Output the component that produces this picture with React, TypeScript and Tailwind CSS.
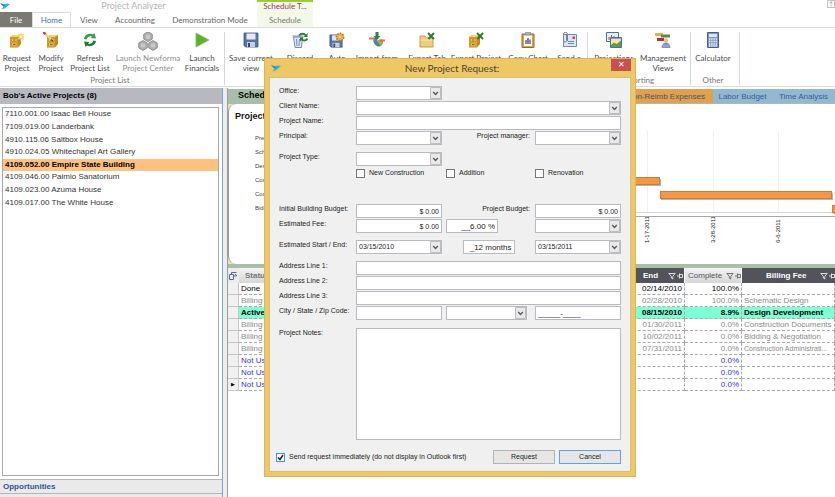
import { useState } from "react"
import type { ReactNode } from "react"

type Tool = { label: string; width: string; icon: ReactNode; disabled?: boolean }

const Bird = () => (
  <svg className="h-2 w-2.5 shrink-0" viewBox="0 0 10 8">
    <path d="M0 1.2 4 2 8 1.4 10 2.6 7.8 3.8 5.6 6 1.5 7.4 3.6 4.6Z" fill="#3aaee0" />
    <path d="M0 1.2 3.6 4.6 5.4 3.4Z" fill="#1b86bd" />
  </svg>
)

const Cabinet = ({ x = 1, y = 3 }: { x?: number; y?: number }) => (
  <g transform={`translate(${x} ${y})`}>
    <path d="M0 2 3 0h8v9l-3 3.500H0Z" fill="#c08a1c" />
    <path d="M0 2 3 0h8L8 2Z" fill="#f4d274" />
    <path d="M.5 2.500h7.500v9.500H.5Z" fill="#e3ad36" />
    <path d="M1.500 3.500h5.500v3H1.500ZM1.500 8h5.500v3H1.500Z" fill="#f4cb62" stroke="#b27e1a" strokeWidth=".6" />
    <path d="M3 5h2.500M3 9.500h2.500" stroke="#8a6210" />
  </g>
)

const Disk = () => (
  <g>
    <path d="M1 1h14v14H2.500L1 13.500Z" fill="#5674a6" stroke="#3a5484" strokeWidth=".8" />
    <path d="M3.500 1.500h9v6h-9Z" fill="#e4ebf5" />
    <path d="M4 10h8v5H4Z" fill="#c6d0df" />
    <path d="M5 11h2v4H5Z" fill="#2f4773" />
  </g>
)

const Excel = () => <path d="m9 1 6 6M15 1 9.500 7" stroke="#2a7d34" strokeWidth="2" />

const Icon = ({ children }: { children: ReactNode }) => (
  <svg className="h-4 w-4 shrink-0" viewBox="0 0 16 16" fill="none">
    {children}
  </svg>
)

const hexagon = "m0-4.300 3.700 2.100v4.300L0 4.300l-3.700-2.200v-4.300Z"

const projectTools: Tool[] = [
  {
    label: "Request Project",
    width: "w-[34px]",
    icon: (
      <Icon>
        <Cabinet />
        <path d="m12 0 .8 2.600 2.400-1-1 2.400 1.800.8-1.800.8 1 2.400-2.400-1L12 9.400l-.8-2.400-2.400 1 1-2.400-1.800-.8 1.800-.8-1-2.400 2.400 1Z" fill="#f8d063" />
        <circle cx="12" cy="4.700" r="1.400" fill="#fff6cf" />
      </Icon>
    ),
  },
  {
    label: "Modify Project",
    width: "w-[34px]",
    icon: (
      <Icon>
        <Cabinet x={4} y={3} />
        <path d="m1 1 8 7" stroke="#f2c98c" strokeWidth="2.200" />
        <path d="m0 0 2.500 2.200" stroke="#d4374f" strokeWidth="2.400" />
        <path d="m8 7.500 2 1.800" stroke="#554128" strokeWidth="1.200" />
      </Icon>
    ),
  },
  {
    label: "Refresh Project List",
    width: "w-11",
    icon: (
      <Icon>
        <path d="M2 7c.5-4 5-6.500 9-4.500L12.500 1l1.500 5.500-5.500-.5 1.500-1.500C7.500 3.500 5 5 4.800 7.500Z" fill="#3f9b4d" />
        <path d="M14 9c-.5 4-5 6.500-9 4.500L3.500 15 2 9.500l5.500.5L6 11.500c2.500 1 5-.500 5.200-3Z" fill="#26773c" />
      </Icon>
    ),
  },
  {
    label: "Launch Newforma Project Center",
    width: "w-[72px]",
    disabled: true,
    icon: (
      <svg className="h-5 w-5 shrink-0" viewBox="0 0 20 20">
        <g fill="#b0b0b0" stroke="#8c8c8c" strokeWidth=".8">
          <path transform="translate(10 4.700) scale(1.150)" d={hexagon} />
          <path transform="translate(5 13.500) scale(1.150)" d={hexagon} />
          <path transform="translate(15 13.500) scale(1.150)" d={hexagon} />
        </g>
        <g fill="#c8c8c8">
          <circle cx="10" cy="4.700" r="2.300" />
          <circle cx="5" cy="13.500" r="2.300" />
          <circle cx="15" cy="13.500" r="2.300" />
        </g>
      </svg>
    ),
  },
  {
    label: "Launch Financials",
    width: "w-9",
    icon: (
      <Icon>
        <path d="M2 1 15 8 2 15Z" fill="#5fae2e" stroke="#82c052" strokeWidth=".8" />
      </Icon>
    ),
  },
]

const scheduleTools: Tool[] = [
  { label: "Save current view", width: "w-[52px]", icon: <Icon><Disk /></Icon> },
  {
    label: "Discard",
    width: "w-[46px]",
    icon: (
      <Icon>
        <path d="M1.500 5h9l-1 10.500H3Z" fill="#dfe7f2" stroke="#7389ab" />
        <path d="M.5 4h11M4.500 7l.5 7M7.500 7l-.5 7" stroke="#7389ab" />
        <path d="M7 3.500c2-2.500 5-2.500 7 0M15.500 6.500c-2 2.500-4.500 2.500-6.500 0" stroke="#258038" strokeWidth="2" />
        <path d="M15.500 1v4h-4ZM8 9.500V5.500h4Z" fill="#258038" />
      </Icon>
    ),
  },
  {
    label: "Auto",
    width: "w-7",
    icon: (
      <Icon>
        <g transform="translate(0 2) scale(.88)"><Disk /></g>
        <circle cx="11" cy="5" r="3.600" fill="#f0bd4a" stroke="#b67d1c" strokeWidth="1.800" strokeDasharray="1.700 1" />
        <circle cx="11" cy="5" r="1.300" fill="#fff" stroke="#b67d1c" strokeWidth=".6" />
      </Icon>
    ),
  },
  {
    label: "Import from",
    width: "w-[52px]",
    icon: (
      <Icon>
        <path d="M8 9V3.500A5.500 5.500 0 1 0 12 14Z" fill="#547fae" />
        <path d="m8 9 5-1.500A5 5 0 0 1 11.500 14Z" fill="#8bbf4e" stroke="#5e8e32" strokeWidth=".6" />
        <path d="M0 6.500h5M10 8.500h6" stroke="#e8703f" strokeWidth="2" />
        <path d="M6.500 0h3v4h2L8 8 4.500 4h2Z" fill="#2f7f49" />
      </Icon>
    ),
  },
  {
    label: "Export Tab",
    width: "w-12",
    icon: (
      <Icon>
        <path d="M1 4h5l1.500 2H14v9H1Z" fill="#f0cd7c" stroke="#c99b42" />
        <path d="M1.500 8h12" stroke="#fae7b3" />
        <Excel />
      </Icon>
    ),
  },
  { label: "Export Project", width: "w-[50px] whitespace-nowrap", icon: <Icon><Cabinet /><Excel /></Icon> },
  {
    label: "Copy Chart",
    width: "w-[54px]",
    icon: (
      <Icon>
        <path d="M2 2h12v13.500H2Z" fill="#dca63c" stroke="#9a6d1c" />
        <path d="M4 3.500h8V14H4Z" fill="#fff" />
        <path d="M5.500 0h5v3h-5Z" fill="#a9b2c2" stroke="#6e7891" strokeWidth=".5" />
        <path d="M6 12V8" stroke="#3e73b8" strokeWidth="1.500" />
        <path d="M8 12V6" stroke="#c2304e" strokeWidth="1.500" />
        <path d="M10 12V7.500" stroke="#3e73b8" strokeWidth="1.500" />
      </Icon>
    ),
  },
  {
    label: "Send a",
    width: "w-7",
    icon: (
      <Icon>
        <path d="M2.500 2.500h13v12h-13Z" fill="#dbe6f6" stroke="#6e8ab8" />
        <path d="M11.500 4.500h2.500V7h-2.500Z" fill="#c9404f" />
        <path d="M7 9.500h6M7 11.500h6" stroke="#6e8ab8" />
        <path d="M5.500 3v5.500a1.500 1.500 0 0 1-3 0V2.500a2 2 0 0 1 4-.500v7" stroke="#7b828e" />
      </Icon>
    ),
  },
]

const reportTools: Tool[] = [
  {
    label: "Projections",
    width: "w-[52px]",
    icon: (
      <Icon>
        <path d="M.5.5h12v9H.5Z" fill="#e6eefa" stroke="#4c6ca8" />
        <path d="M3 8V5M5.500 8V3M8 8V4" stroke="#c2404c" />
        <path d="M4.500 5.500h11v10h-11Z" fill="#f5e6a6" stroke="#4c6ca8" />
        <path d="m5 15 0-2 3-2.500 2.500 1.500L15 8.500V15Z" fill="#5e9e3c" />
        <path d="M5 6.500h10" stroke="#7da1da" />
      </Icon>
    ),
  },
  {
    label: "Management Views",
    width: "w-[46px]",
    icon: (
      <Icon>
        <path d="M0 1h8v3H0Z" fill="#e0b04a" />
        <path d="M6 2.500h9v3H6Z" fill="#5b8c34" />
        <path d="M2 6h7v3H2Z" fill="#b52f39" />
        <circle cx="11" cy="8.500" r="2.200" fill="#eebd8f" />
        <path d="M7 16c0-3.500 1.500-5 4-5s4 1.500 4 5Z" fill="#86a7dc" stroke="#587bb8" strokeWidth=".6" />
        <path d="m9.500 11 1.500 2 1.500-2Z" fill="#d6603f" />
      </Icon>
    ),
  },
]

const otherTools: Tool[] = [
  {
    label: "Calculator",
    width: "w-11",
    icon: (
      <Icon>
        <path d="M2.500.5h11v15h-11Z" fill="#7c98c4" stroke="#42608f" />
        <path d="M4 2h8v3H4Z" fill="#dde8f7" />
        <path d="M4 7h8M4 9.500h8M4 12h8M4 14h8" stroke="#eef3fb" strokeWidth="1.400" strokeDasharray="1.400 .8" />
      </Icon>
    ),
  },
]

const projects = [
  "7110.001.00 Isaac Bell House",
  "7109.019.00 Landerbank",
  "4910.115.06 Saltbox House",
  "4910.024.05 Whitechapel Art Gallery",
  "4109.052.00 Empire State Building",
  "4109.046.00 Paimio Sanatorium",
  "4109.023.00 Azuma House",
  "4109.017.00 The White House",
]

const phases = [
  { status: "Done", end: "02/14/2010", complete: "100.0%", fee: "", tone: "text-black" },
  { status: "Billing", end: "02/28/2010", complete: "100.0%", fee: "Schematic Design", tone: "text-[#8a8a8a]" },
  { status: "Active", end: "08/15/2010", complete: "8.9%", fee: "Design Development", tone: "bg-[#7fffd4] font-bold text-black" },
  { status: "Billing", end: "01/30/2011", complete: "0.0%", fee: "Construction Documents", tone: "text-[#8a8a8a]" },
  { status: "Billing", end: "10/02/2011", complete: "0.0%", fee: "Bidding & Negotiation", tone: "text-[#8a8a8a]" },
  { status: "Billing", end: "07/31/2011", complete: "0.0%", fee: "Construction Administrati...", tone: "text-[#8a8a8a]" },
  { status: "Not Used", end: "", complete: "0.0%", fee: "", tone: "text-[#2f2fff]" },
  { status: "Not Used", end: "", complete: "0.0%", fee: "", tone: "text-[#2f2fff]" },
  { status: "Not Used", end: "", complete: "0.0%", fee: "", tone: "text-[#2f2fff]" },
]

function RibbonGroup({ tools, title }: { tools: Tool[]; title?: string }) {
  return (
    <div className="flex shrink-0 flex-col border-r border-[#cfd8e6] pr-1">
      <div className="flex h-[43px] items-start">
        {tools.map((tool) => (
          <button
            key={tool.label}
            className={`${tool.width} ${tool.disabled ? "text-[#8f8f8f]" : "text-[#4c4c4c]"} flex flex-col items-center text-center leading-[10px]`}
          >
            <span className="flex h-[21px] items-start justify-center">{tool.icon}</span>
            <span>{tool.label}</span>
          </button>
        ))}
      </div>
      <div className="text-center leading-[10px] text-[#777]">{title}</div>
    </div>
  )
}

function Header() {
  return (
    <header className="font-['Lato',sans-serif] text-[8px]">
      <div className="flex h-[27px]">
        <div className="w-[257px] shrink-0">
          <div className="flex h-3 items-center">
            <Bird />
            <span className="flex-1 text-center text-[9px] leading-3 text-[#b4b4b4]">Project Analyzer</span>
          </div>
          <nav className="flex h-[15px] text-[#666]">
            <button className="w-8 bg-[#7b7a72] text-white">File</button>
            <button className="w-[39px] border-x border-t border-[#dcdcdc] bg-white text-[#3a70b4]">Home</button>
            <button className="w-9">View</button>
            <button className="w-14">Accounting</button>
            <button className="flex-1">Demonstration Mode</button>
          </nav>
        </div>
        <div className="flex w-14 flex-col border-t-2 border-[#9acd32] bg-[#f3f9e8] text-center">
          <span className="h-2.5 leading-[8px] text-[#a0306e]">Schedule T...</span>
          <button className="flex-1 text-[#777]">Schedule</button>
        </div>
        <button className="ml-auto h-2 w-2 self-start border border-[#c4c4c4] text-[6px] leading-[6px] text-[#999]" aria-label="Collapse ribbon">
          ↑
        </button>
      </div>
      <div className="flex h-[60px] border-y border-[#dcdcdc] pt-1 pb-px">
        <RibbonGroup tools={projectTools} title="Project List" />
        <RibbonGroup tools={scheduleTools} />
        <RibbonGroup tools={reportTools} title="Reporting" />
        <RibbonGroup tools={otherTools} title="Other" />
      </div>
    </header>
  )
}

function Sidebar() {
  const [selected, setSelected] = useState(4)

  return (
    <aside className="flex w-[223px] shrink-0 flex-col border-r border-[#7fa5d8] text-[8px]">
      <h2 className="h-4 shrink-0 bg-[#b7b8c0] px-[3px] font-bold leading-4">Bob's Active Projects (8)</h2>
      <div className="mt-[3px] mr-[3px] ml-0.5 flex-1 border border-[#a5a7ae] bg-white">
        <ul className="grid h-[101px] auto-rows-fr">
          {projects.map((project, i) => (
            <li key={project} className="grid">
              <button
                onClick={() => setSelected(i)}
                className={`${i === selected ? "bg-[#ffc080] font-bold text-black" : "text-[#333]"} pl-0.5 text-left leading-[12px]`}
              >
                {project}
              </button>
            </li>
          ))}
        </ul>
      </div>
      <button className="mt-[3px] h-[15px] border-y border-[#b5b6ba] bg-[#eaeaea] px-[3px] text-left font-bold text-[#2f5597]">
        Opportunities
      </button>
      <div className="h-[3px] bg-[#eaeaea]" />
    </aside>
  )
}

const chartRows = ["Predesign", "Schematic", "Design", "Construction", "Contract", "Bidding"]
const chartDates = [
  { x: 418, label: "1-17-2011" },
  { x: 484, label: "3-28-2011" },
  { x: 549, label: "6-6-2011" },
]
const chartBars = [
  { x: 300, y: 73, width: 131 },
  { x: 431, y: 87, width: 172 },
  { x: 603, y: 101, width: 60 },
]

function ScheduleChart() {
  return (
    <section className="border-b-4 border-[#a9bda9] bg-[#f3dcae]">
      <div className="h-[160px] overflow-hidden rounded-l-lg border-l border-[#9b9b9b] bg-white">
        <svg className="h-[160px] w-full" fontFamily="Liberation Sans, Arial, sans-serif">
          <text x="6" y="15" fontSize="9" fontWeight="bold" fill="#111">Project Schedule</text>
          {chartRows.map((row, i) => (
            <text key={row} x="26" y={36 + i * 14} fontSize="6" fill="#444">{row}</text>
          ))}
          {chartDates.map((date) => (
            <g key={date.label}>
              <path d={`M${date.x}.5 27v81`} stroke="#f0f0f0" />
              <text transform={`translate(${date.x + 2} 139) rotate(-90)`} fontSize="6" fill="#111">{date.label}</text>
            </g>
          ))}
          <path d="M80 108.500h800" stroke="#d8d8d8" />
          <path d="M80 112.500h800" stroke="#a8a8a8" />
          {chartBars.map((bar) => (
            <g key={bar.x}>
              <rect x={bar.x + 1} y={bar.y + 2} width={bar.width} height="7" fill="#b5b5b5" />
              <rect x={bar.x + 0.5} y={bar.y + 0.5} width={bar.width - 1} height="7" fill="#f79646" stroke="#cf7a35" />
            </g>
          ))}
        </svg>
      </div>
    </section>
  )
}

function HeadTools() {
  return (
    <svg className="h-2 w-[15px] shrink-0" viewBox="0 0 15 8" fill="none" stroke="currentColor" strokeWidth=".8">
      <path d="M.8 1.500h6.400L4.800 4.300V7L3.300 6V4.300Z" />
      <path d="M9 4h2M11.500 1.500v5M11.500 2.500h3v3h-3" />
    </svg>
  )
}

function PhaseTable() {
  const cell = "h-3 border-r border-b border-dashed border-[#a9a9a9] p-0 px-0.5"

  return (
    <table className="w-full table-fixed border-separate border-spacing-0 text-[8px] leading-[11px]">
      <thead>
        <tr className="h-[15px] text-left text-white">
          <th className="w-[11px] bg-[#ececec] p-0">
            <svg className="h-2.5 w-2.5" viewBox="0 0 10 10" fill="none" stroke="#54688f">
              <path d="M1.500 3.500h4v5h-4zM3.500 3V1.500h5M5.500 5h3M7 3l2 2" />
            </svg>
          </th>
          <th className="bg-linear-to-b from-[#f4f4f4] to-[#d6d6d6] p-0 pl-1.5 text-[#777]">Status</th>
          <th className="w-[62px] border-r border-white bg-[#535459] p-0 pr-px">
            <div className="flex items-center justify-between pl-5">End <HeadTools /></div>
          </th>
          <th className="w-[57px] border-r border-white bg-linear-to-b from-[#f4f4f4] to-[#d6d6d6] p-0 pl-[3px] font-normal text-[#555]">
            <div className="flex items-center justify-between">Complete <HeadTools /></div>
          </th>
          <th className="w-[93px] bg-[#535459] p-0">
            <div className="flex items-center justify-between pl-6">Billing Fee <HeadTools /></div>
          </th>
        </tr>
      </thead>
      <tbody>
        {phases.map((phase, i) => (
          <tr key={i} className={phase.tone}>
            <td className="h-3 border-r border-b border-[#c5c5c5] bg-[#f1f1f1] p-0 text-center text-[5px] text-black">
              {i === phases.length - 1 ? "▶" : ""}
            </td>
            <td className={cell}>{phase.status}</td>
            <td className={`${cell} text-right`}>{phase.end}</td>
            <td className={`${cell} text-right`}>{phase.complete}</td>
            <td className={`${cell} ${phase.fee.length > 24 ? "text-[7px]" : ""} whitespace-nowrap`}>{phase.fee}</td>
          </tr>
        ))}
      </tbody>
    </table>
  )
}

const field = "h-[14px] w-full rounded-none border border-[#b9bac0] bg-white px-0.5 leading-[12px] text-[#222] outline-none"
const box = `${field} text-[7px]`
const masked = `${field} text-[8px]`

function Label({ id, children, end }: { id: string; children: ReactNode; end?: boolean }) {
  return (
    <label htmlFor={id} className={`${end ? "pr-[5px] text-right" : ""} block leading-[10px] whitespace-nowrap`}>
      {children}
    </label>
  )
}

function Combo({ id, value = "", label }: { id: string; value?: string; label?: string }) {
  return (
    <div className="relative">
      <select id={id} aria-label={label} className={`${box} block appearance-none`}>
        <option>{value}</option>
      </select>
      <svg className="pointer-events-none absolute top-px right-px h-3 w-[11px]" viewBox="0 0 11 12" fill="none">
        <path d="M.5.5h10v11H.5Z" fill="#e9e9e9" stroke="#bdbdc1" />
        <path d="m3.200 5 2.300 2.500L7.800 5" stroke="#555" strokeWidth="1.300" />
      </svg>
    </div>
  )
}

function Check({ id, children }: { id: string; children: ReactNode }) {
  return (
    <div className="flex items-center gap-1">
      <input id={id} type="checkbox" className="h-[9px] w-[9px] appearance-none border border-[#777] bg-white checked:bg-[#1e7fd0]" />
      <label htmlFor={id}>{children}</label>
    </div>
  )
}

function RequestDialog() {
  const [sendNow, setSendNow] = useState(true)
  const row = "grid grid-cols-[77px_86px_1fr_86px]"
  const wide = "grid grid-cols-[77px_1fr]"

  return (
    <div
      role="dialog"
      aria-label="New Project Request"
      className="absolute top-[58px] left-[264px] flex w-[372px] flex-col border border-[#d9b65c] bg-[#efc866] px-1 pb-1 text-[7px] text-[#222]"
    >
      <div className="flex h-[18px] items-start">
        <span className="flex h-full w-6 items-center pl-0.5"><Bird /></span>
        <h1 className="flex-1 text-center font-['Lato',sans-serif] text-[10px] leading-[18px] text-[#4b4330]">New Project Request:</h1>
        <button aria-label="Close" className="h-3 w-5 bg-[#c75050] text-[8px] leading-3 text-white">✕</button>
      </div>
      <form
        className="flex flex-col gap-px border border-[#d8bd7a] bg-[#f0f0f0] px-[9px] pt-2 pb-[7px]"
        onSubmit={(e) => e.preventDefault()}
      >
        <div className={row}>
          <Label id="office">Office:</Label>
          <Combo id="office" />
        </div>
        <div className={wide}>
          <Label id="client">Client Name:</Label>
          <Combo id="client" />
        </div>
        <div className={wide}>
          <Label id="name">Project Name:</Label>
          <input id="name" className={box} />
        </div>
        <div className={row}>
          <Label id="principal">Principal:</Label>
          <Combo id="principal" />
          <Label id="manager" end>Project manager:</Label>
          <Combo id="manager" />
        </div>
        <div className={`${row} mt-1.5`}>
          <Label id="type">Project Type:</Label>
          <Combo id="type" />
        </div>
        <div className={`${row} mt-px leading-[10px]`}>
          <div className="col-start-2"><Check id="new">New Construction</Check></div>
          <div className="pl-1"><Check id="addition">Addition</Check></div>
          <Check id="renovation">Renovation</Check>
        </div>
        <div className={`${row} mt-[25px]`}>
          <Label id="initial">Initial Building Budget:</Label>
          <input id="initial" className={`${box} text-right`} defaultValue="$ 0.00" />
          <Label id="budget" end>Project Budget:</Label>
          <input id="budget" className={`${box} text-right`} defaultValue="$ 0.00" />
        </div>
        <div className={row}>
          <Label id="fee">Estimated Fee:</Label>
          <input id="fee" className={`${box} text-right`} defaultValue="$ 0.00" />
          <div className="flex pl-1">
            <div className="w-[52px]"><input aria-label="Fee percent" className={`${masked} text-right`} defaultValue="__6.00 %" /></div>
          </div>
          <Combo id="fee-type" label="Fee type" />
        </div>
        <div className={`${row} mt-1.5`}>
          <Label id="start">Estimated Start / End:</Label>
          <Combo id="start" value="03/15/2010" />
          <div className="flex justify-center">
            <div className="w-[52px]"><input aria-label="Duration" className={`${masked} text-right`} defaultValue="_12 months" /></div>
          </div>
          <Combo id="end" label="Estimated end" value="03/15/2011" />
        </div>
        <div className={`${wide} mt-1.5`}>
          <Label id="address1">Address Line 1:</Label>
          <input id="address1" className={box} />
        </div>
        <div className={wide}>
          <Label id="address2">Address Line 2:</Label>
          <input id="address2" className={box} />
        </div>
        <div className={wide}>
          <Label id="address3">Address Line 3:</Label>
          <input id="address3" className={box} />
        </div>
        <div className={row}>
          <Label id="city">City / State / Zip Code:</Label>
          <input id="city" className={box} />
          <div className="pr-2 pl-1"><Combo id="state" label="State" /></div>
          <input aria-label="Zip code" className={masked} defaultValue="_____-____" />
        </div>
        <div className={`${wide} mt-[7px]`}>
          <Label id="notes">Project Notes:</Label>
          <textarea id="notes" className="block h-28 w-full resize-none border border-[#b9bac0] bg-white p-1 outline-none" />
        </div>
        <div className="mt-[9px] flex items-center gap-1">
          <span className="relative -ml-[3px] flex">
            <input
              id="send"
              type="checkbox"
              checked={sendNow}
              onChange={(e) => setSendNow(e.target.checked)}
              className="h-[9px] w-[9px] appearance-none border border-[#3c96e8] bg-white"
            />
            {sendNow && (
              <svg className="pointer-events-none absolute inset-0 h-[9px] w-[9px]" viewBox="0 0 9 9" fill="none">
                <path d="m2 4.500 2 2 3-4.500" stroke="#222" strokeWidth="1.500" />
              </svg>
            )}
          </span>
          <label htmlFor="send" className="flex-1 whitespace-nowrap">Send request immediately (do not display in Outlook first)</label>
          <button className="h-[14px] w-[62px] border border-[#b3b3b3] bg-[#e6e6e6] leading-3">Request</button>
          <button type="button" className="h-[14px] w-[62px] border border-[#5aa5ee] bg-[#e6e6e6] leading-3">Cancel</button>
        </div>
      </form>
    </div>
  )
}

export default function App() {
  return (
    <div className="relative flex h-screen flex-col overflow-hidden bg-white font-['Liberation_Sans',Arial,sans-serif] text-black">
      <Header />
      <div className="flex min-h-0 flex-1 pt-px">
        <Sidebar />
        <div className="w-[5px] shrink-0 border-r border-[#9c9c9c] bg-[#eceded]" />
        <main className="flex min-w-0 flex-1 flex-col pt-px">
          <nav className="flex h-[15px] justify-between border-b border-[#b5b5b5] bg-[#93b9d1] text-[8px] text-[#2d5fa6]">
            <button className="w-20 bg-[#a6bfa9] pl-2.5 text-left text-[9px] font-bold text-black">Schedule</button>
            <span className="flex">
              <button className="w-24 bg-[#e0a04c] pt-0.5 pr-2 text-right whitespace-nowrap text-[#4b5270]">Non-Reimb Expenses</button>
              <button className="w-[59px] pt-0.5">Labor Budget</button>
              <button className="w-[63px] pt-0.5">Time Analysis</button>
            </span>
          </nav>
          <ScheduleChart />
          <PhaseTable />
        </main>
      </div>
      <RequestDialog />
    </div>
  )
}
